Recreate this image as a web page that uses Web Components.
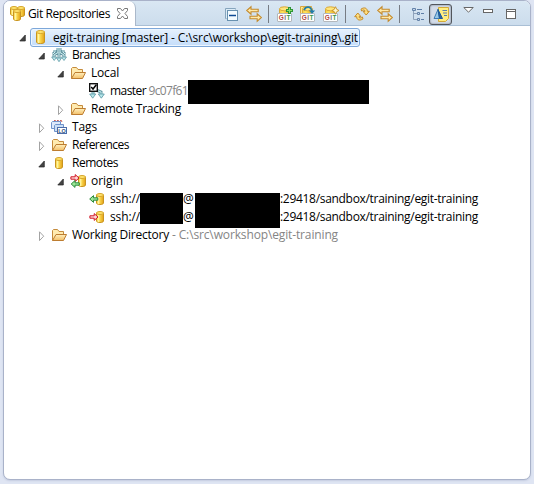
<!DOCTYPE html>
<html lang="en">
<head>
<meta charset="utf-8">
<title>Git Repositories</title>
<style>
html,body{margin:0;width:534px;height:484px;overflow:hidden;background:#dfe5f3}
body{font:12px/18px "Open Sans","Noto Sans",sans-serif;color:#000}
</style>
</head>
<body>
<git-view></git-view>
<script>
const CYL = (x,y,w,h) => `<g transform="translate(${x} ${y})"><path d="M.5 2v${h-4}c0 2 ${w-1} 2 ${w-1} 0V2z" fill="url(#gold)" stroke="#c99420"/><path d="M2.5 3v${h-4}" stroke="#fff3a0" stroke-width="1.5"/><ellipse cx="${w/2}" cy="2" rx="${w/2-.5}" ry="1.5" fill="#ffe36c" stroke="#d6a52c"/></g>`;
const DEFS = `<defs><linearGradient id="gold"><stop stop-color="#f8cf42"/><stop offset=".35" stop-color="#ffe45c"/><stop offset="1" stop-color="#e3a016"/></linearGradient><linearGradient id="fold" x2="0" y2="1"><stop stop-color="#fff0be"/><stop offset="1" stop-color="#f3bf68"/></linearGradient></defs>`;
const GREEN = (x,y) => `<path transform="translate(${x} ${y})" d="M.7 4L4.5 .6v2.2h4.3v2.4H4.5v2.2z" fill="#9be695" stroke="#2b8a3c"/>`;
const RED = (x,y) => `<path transform="translate(${x} ${y})" d="M9 4L5.2 .6v2.2H.9v2.4h4.3v2.2z" fill="#ffd8d8" stroke="#d01424"/>`;
const LETTER = (x,y,s,c,f=6.5) => `<text x="${x}" y="${y}" font-family="Liberation Sans, sans-serif" font-weight="bold" font-size="${f}" text-anchor="middle" fill="${c}">${s}</text>`;
const GITBOX = `<path d="M2.5 3v6h10V3" fill="url(#gold)" stroke="#d9a93a"/><ellipse cx="7.5" cy="2.8" rx="5" ry="2" fill="#ffe67c" stroke="#d9a93a"/><rect x=".5" y="7.5" width="14" height="8" rx=".5" fill="#fff" stroke="#b4b8bd"/>` + `<text y="13.8" font-family="Liberation Sans, sans-serif" font-weight="bold" font-size="6.5"><tspan x="1.8" fill="#b5443c">G</tspan><tspan x="7.2" fill="#777">I</tspan><tspan x="9.6" fill="#3f9a4d">T</tspan></text>`;
const ICONS = {
  repo: CYL(4,1,9,14),
  remotes: CYL(4,2,8,12),
  repos: `<g>${CYL(1,1,8,10)}${CYL(8,1,8,11)}${CYL(4,4,8,12)}</g>`,
  folder: `<path d="M1.5 13.5v-10l1-1h4l1.5 2h4.5v3" fill="#ffebb0" stroke="#c58b3c"/><path d="M1.5 13.5L5 7.5h10.5l-3 6z" fill="url(#fold)" stroke="#bd7d31"/>`,
  branches: `<g fill="none" stroke="#6797a3" stroke-width="3"><path d="M7 1v4.5L3 8v3M9 1v4.5L13 8v3M4 3v2L2 7M12 3v2l2 2M8 5v6"/></g><path d="M7 1v4.5L3 8v3M9 1v4.5L13 8v3M4 3v2L2 7M12 3v2l2 2M8 5v6" fill="none" stroke="#d2f0f2"/><path d="M.7 10h5L3.2 13.5zM5.5 11h5L8 14.7zM10.5 10h5L13 13.5z" fill="#c3ebee" stroke="#5d98a5" stroke-width=".8"/>`,
  branch: `<path d="M4 8v4M7 7l5 2v3" fill="none" stroke="#679ca8" stroke-width="3"/><path d="M4 8v4M7 7l5 2v3" fill="none" stroke="#c7edf0"/><path d="M.7 11h6L3.7 15.2zM9.3 11h6l-3 4.2z" fill="#b7e8eb" stroke="#5794a2" stroke-width=".8"/><rect x=".7" y=".7" width="7.6" height="7.6" fill="#fff" stroke="#111" stroke-width="1.4"/><path d="M2.2 4.1L4 6l3.3-4.2" fill="none" stroke="#000" stroke-width="1.5"/>`,
  tags: `<path d="M2 3L4 1l1 2 2-2 1 2 2-2 1 2" fill="none" stroke="#c9635b"/><path d="M.5 9.5v-6l1-1h8v7z" fill="#dce9fa" stroke="#6f92cb"/><path d="M3.5 12.5v-6l1-1h8v7z" fill="#c9def5" stroke="#6f92cb"/><rect x="6.5" y="8.5" width="9" height="6" fill="#fff" stroke="#4c6da9"/>` + LETTER(11,13.6,'LO','#32517e',5.5),
  origin: `${CYL(8,2,8,12)}${RED(0,1)}${GREEN(.5,7)}`,
  fetch: `${CYL(7,2,8,12)}${GREEN(0,4)}`,
  push: `${CYL(7,2,8,12)}${RED(0,4)}`,
  collapse: `<path d="M12.5 3.5v-1h-10v10h1" fill="#dcecf7" stroke="#86a5bd"/><rect x="4.5" y="4.5" width="10" height="10" fill="#f3fbff" stroke="#6891b0"/><path d="M6 9.5h7" stroke="#0d4a95" stroke-width="1.5"/>`,
  sync: `<path d="M.8 4.5L5 .8v2.4h7.2v2.5H5v2.5zM15.3 11.5l-4.1 3.8v-2.5H4v-2.5h7.2V7.8z" fill="#ffe9a8" stroke="#c48a2c" stroke-width="1.1"/>`,
  add: GITBOX + `<path d="M12.5 1v7M9 4.5h7" stroke="#2f9635" stroke-width="3"/><path d="M12.5 2v5M10 4.5h5" stroke="#8ade66"/>`,
  clone: `<path d="M.5 8V.5h11V8" fill="#ffe98e" stroke="#d9a640"/>` + GITBOX + `<path d="M4 4c2-4 7-4 8 1.5" fill="none" stroke="#217da9" stroke-width="1.8"/><path d="M8.8 4.5h6.4L12 7.8z" fill="#217da9"/>`,
  create: GITBOX + `<path d="M12.5.7l1.2 2.6 2.3 1.2-2.3 1.2-1.2 2.6-1.2-2.6L9 4.5l2.3-1.2z" fill="#fff9cc" stroke="#c79126" stroke-width=".9"/>`,
  refresh: `<path d="M7 3.2C10 .8 13.5 2 13.3 5.3h2L12.2 9 9 5.3h2c0-1.7-2-1.7-3.4-.3zM9 12.8C6 15.2 2.5 14 2.7 10.7h-2L3.8 7 7 10.7H5c0 1.7 2 1.7 3.4.3z" fill="#ffe080" stroke="#c48a28"/>`,
  tree: `<path d="M3.5 5v8.5H8M3.5 7.5H8" fill="none" stroke="#8fa2ba"/><path d="M2.5 2.5h3v2h-3zM7.5 6.5h2v2h-2zM7.5 12.5h2v2h-2z" fill="#c4d6ea" stroke="#6482a8"/><path d="M7 3.5h5M11 7.5h3M11 13.5h3" stroke="#5e7fa7"/>`,
  hierarchy: `<path d="M5.5.5h10v11l-3 3h-7z" fill="#ffee80" stroke="#d3a938"/><path d="M9.5 3.5H14M10 6h4M11 8.5h3" stroke="#557fac"/><path d="M1 11.5L5 2.5l1.5 9z" fill="#9ac9e8" stroke="#3f7cb3"/><path d="M5 2.5l4.5 9h-3z" fill="#2c62a0" stroke="#205a98"/>`,
  close: `<path d="M3.5 3.5h3l2 2.5 2-2.5h3v2L11 8.5l2.5 3v2h-3L8.5 11l-2 2.5h-3v-2l2.5-3-2.5-3z" fill="#fff" stroke="#777"/>`,
  menu: `<path d="M3.8 4.5h9.4L8.5 9.2z" fill="#fff" stroke="#666"/>`,
  min: `<rect x="3.5" y="5.5" width="9" height="3" fill="#fff" stroke="#666"/>`,
  max: `<rect x="3.5" y="5.5" width="9" height="9" fill="#fff" stroke="#666"/><path d="M3 7.5h10" stroke="#666"/>`,
  open: `<path d="M6.3 6v6H.8z" fill="#444" stroke="#222" stroke-width=".7"/>`,
  closed: `<path d="M1.5 4.8l4.2 4.4-4.2 4.4z" fill="#fff" stroke="#a3a3a3"/>`
};

/* <git-icon name w>: a small vector glyph */
class GitIcon extends HTMLElement {
  connectedCallback() {
    const w = this.getAttribute('w') || 16;
    this.attachShadow({mode:'open'}).innerHTML = `<style>:host{display:block;flex:none;width:${w}px;height:16px}svg{display:block;overflow:visible}</style><svg width="${w}" height="16" viewBox="0 0 ${w} 16" fill="none">${DEFS}${ICONS[this.getAttribute('name')] || ''}</svg>`;
  }
}
customElements.define('git-icon', GitIcon);

/* <fit-text w>: a label tracked to occupy exactly w pixels */
class FitText extends HTMLElement {
  connectedCallback() {
    const w = +this.getAttribute('w'), t = this.getAttribute('text');
    this.attachShadow({mode:'open'}).innerHTML = `<style>:host{display:block;flex:none;width:${w}px;white-space:pre}span{display:inline-block}</style><span></span>`;
    const s = this.shadowRoot.querySelector('span');
    s.textContent = t;
    s.style.letterSpacing = (w - s.getBoundingClientRect().width) / t.length + 'px';
  }
}
customElements.define('fit-text', FitText);

/* <tree-row level icon state>: one tree line, content is slotted */
class TreeRow extends HTMLElement {
  connectedCallback() {
    const l = +this.getAttribute('level');
    this.attachShadow({mode:'open'}).innerHTML = `<style>
      :host{display:flex;height:18px;padding-left:${15 + 19*l}px}
      .arrow{width:7px;padding-top:1px;margin-right:4px}
      .item{display:flex;box-sizing:border-box;height:18px;padding-left:2px}
      .icon{padding-top:1px;margin-right:5px}
      :host([selected]) .item{height:19px;width:330px;padding-left:1px;border:1px solid #7da7d9;border-radius:3px;background:linear-gradient(#e6f1fd,#c4ddfa);box-shadow:inset 0 0 0 1px #edf6ff;line-height:17px}
      :host([selected]) .icon{padding-top:0}
    </style><div class="arrow"><git-icon w="7" name="${this.getAttribute('state')||''}"></git-icon></div>
    <div class="item"><git-icon class="icon" name="${this.getAttribute('icon')}"></git-icon><slot></slot></div>`;
  }
}
customElements.define('tree-row', TreeRow);

class ViewToolbar extends HTMLElement {
  connectedCallback() {
    this.attachShadow({mode:'open'}).innerHTML = `<style>
      :host{display:flex;align-items:flex-start;padding-top:5px}
      i{width:1px;height:18px;background:#777c84;flex:none;margin-top:-1px}
      git-icon{margin-right:7px}
      .on{box-sizing:border-box;width:23px;height:21px;margin:-2px 10px 0 0;padding:2px 3px;border:1px solid #52565c;border-radius:3px;background:#d3dce9;box-shadow:inset 0 0 2px #68717f}
    </style>
    <git-icon name="collapse"></git-icon><git-icon name="sync" style="margin-right:6px"></git-icon><i></i>
    <git-icon name="add" style="margin-left:8px"></git-icon><git-icon name="clone"></git-icon><git-icon name="create" style="margin-right:6px"></git-icon><i></i>
    <git-icon name="refresh" style="margin-left:8px"></git-icon><git-icon name="sync" style="margin-right:6px"></git-icon><i></i>
    <git-icon name="tree" style="margin-left:10px;margin-right:3px"></git-icon>
    <div class="on"><git-icon name="hierarchy"></git-icon></div>
    <git-icon name="menu" style="margin:-3px 4px 0 -2px"></git-icon><git-icon name="min" style="margin:-2px 7px 0 0"></git-icon><git-icon name="max" style="margin:-2px 0 0"></git-icon>`;
  }
}
customElements.define('view-toolbar', ViewToolbar);

class GitView extends HTMLElement {
  connectedCallback() {
    const row = (l,icon,state,inner,extra='') => `<tree-row level="${l}" icon="${icon}" state="${state}" ${extra}>${inner}</tree-row>`;
    const t = (text,w,c='') => `<fit-text text="${text}" w="${w}" class="${c}"></fit-text>`;
    const bar = (w,h,top) => `<b class="bar" style="width:${w}px;height:${h}px;margin-top:${top}px"></b>`;
    const url = (icon,top,h1,h2) => row(3,icon,'',t('ssh://',30)+bar(43,h1,top)+t('@',12)+bar(85,h2,top)+t(':29418/sandbox/training/egit-training',198));
    this.attachShadow({mode:'open'}).innerHTML = `<style>
      :host{display:block;padding:0 3px 4px;height:480px}
      .panel{box-sizing:border-box;height:480px;border:1px solid #a9b2c9;border-radius:7px;background:#fff;overflow:hidden;box-shadow:0 1px 2px #c4cce0}
      header{display:flex;height:25px;background:linear-gradient(#d9e7f3,#cbdcec)}
      .tab{box-sizing:border-box;display:flex;width:132px;height:25px;padding:5px 0 0 5px;background:#fff;border-right:1px solid #aab8ca;border-radius:0 7px 0 0}
      .tab git-icon:first-child{margin-top:-1px}
      .tab fit-text{margin:-1px 4px 0 3px}
      .tab git-icon:last-child{margin-top:-1px}
      .bar{display:block;flex:none;background:#000}
      .dim{color:#858585}
      view-toolbar{flex:1;box-sizing:border-box;padding-left:87px;border-bottom:1px solid #a9bfd5}
      main{padding-top:2px}
    </style>
    <div class="panel">
      <header><div class="tab"><git-icon name="repos"></git-icon>${t('Git Repositories',82)}<git-icon name="close"></git-icon></div><view-toolbar></view-toolbar></header>
      <main>
        ${row(0,'repo','open',t('egit-training [master] - C:\\src\\workshop\\egit-training\\.git',305),'selected')}
        ${row(1,'branches','open',t('Branches',48))}
        ${row(2,'folder','open',t('Local',28))}
        ${row(3,'branch','',t('master',36)+t(' 9c07f61',42,'dim')+bar(181,24,-2))}
        ${row(2,'folder','closed',t('Remote Tracking',90))}
        ${row(1,'tags','closed',t('Tags',25))}
        ${row(1,'folder','closed',t('References',57))}
        ${row(1,'remotes','open',t('Remotes',46))}
        ${row(2,'origin','open',t('origin',32))}
        ${url('fetch',3,15,15)}${url('push',0,16,20)}
        ${row(1,'folder','closed',t('Working Directory',97)+t(' - C:\\src\\workshop\\egit-training',169,'dim'))}
      </main>
    </div>`;
  }
}
customElements.define('git-view', GitView);
</script>
</body>
</html>
